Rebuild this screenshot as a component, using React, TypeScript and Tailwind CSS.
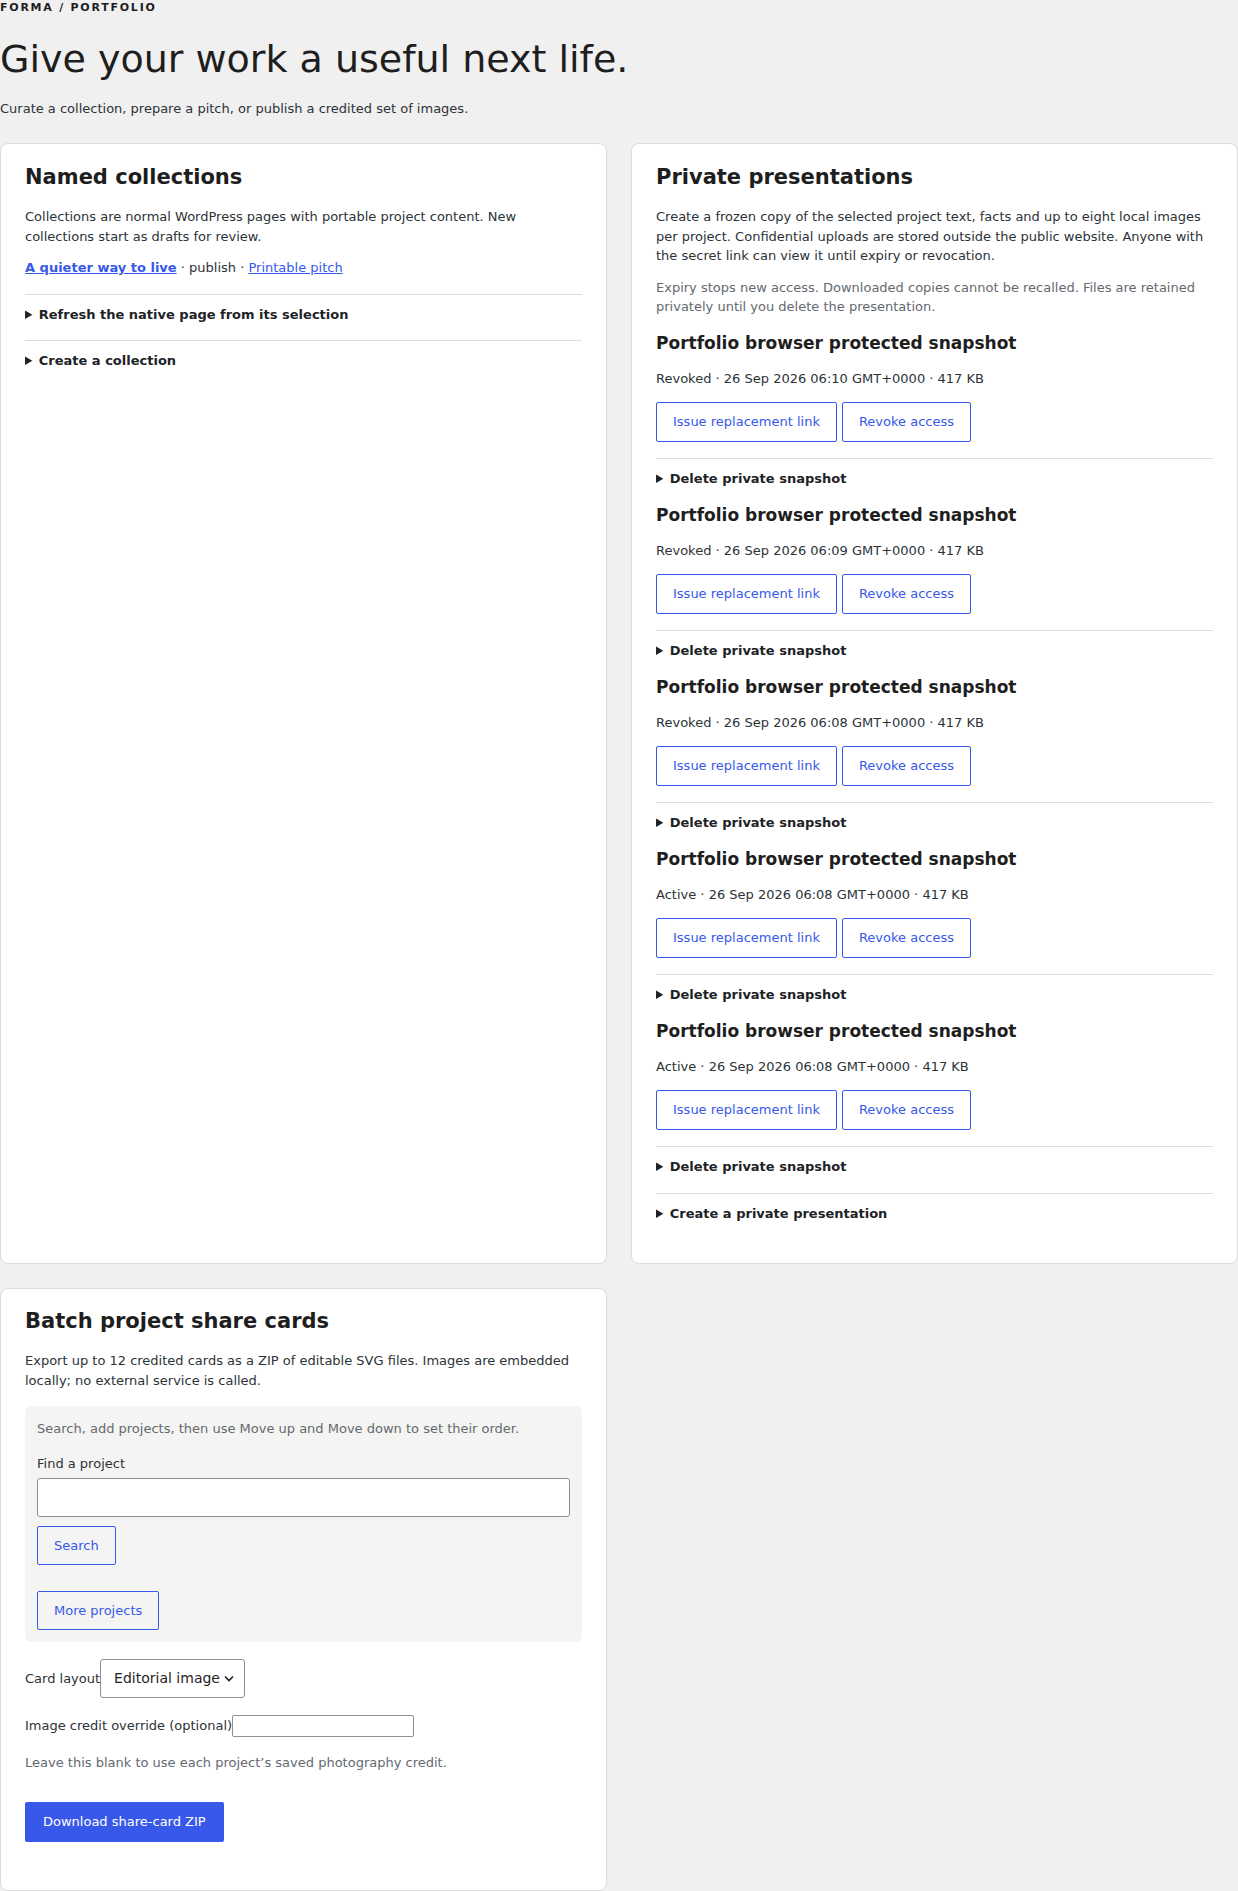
import { ReactNode } from "react";

const snapshots = [
  { id: "s1", status: "Revoked", stamp: "26 Sep 2026 06:10 GMT+0000", size: "417 KB" },
  { id: "s2", status: "Revoked", stamp: "26 Sep 2026 06:09 GMT+0000", size: "417 KB" },
  { id: "s3", status: "Revoked", stamp: "26 Sep 2026 06:08 GMT+0000", size: "417 KB" },
  { id: "s4", status: "Active", stamp: "26 Sep 2026 06:08 GMT+0000", size: "417 KB" },
  { id: "s5", status: "Active", stamp: "26 Sep 2026 06:08 GMT+0000", size: "417 KB" },
];

const OutlineButton = ({ children, tall = true }: { children: ReactNode; tall?: boolean }) => (
  <button
    type="button"
    className={
      (tall ? "h-[40px] " : "h-[39px] ") +
      "rounded-[2px] border border-[#3858e9] bg-transparent px-4 text-[13px] leading-[19.5px] text-[#3858e9]"
    }
  >
    {children}
  </button>
);

const Toggle = ({ label, className }: { label: string; className: string }) => (
  <details className={"border-t border-[#dcdcdc] pt-[10px] " + className}>
    <summary className="cursor-pointer text-[13px] font-bold leading-[19.5px] text-[#1d2327]">
      {label}
    </summary>
  </details>
);

const Card = ({ children, className }: { children: ReactNode; className: string }) => (
  <section className={"rounded-lg border border-[#dcdcdc] bg-white px-6 " + className}>{children}</section>
);

const CardTitle = ({ children }: { children: ReactNode }) => (
  <h2 className="text-[21px] font-bold leading-[25px] text-[#1e1e1e]">{children}</h2>
);

const App = () => {
  return (
    <div className="min-h-screen w-full bg-[#f0f0f0] font-['DejaVu_Sans',sans-serif] text-[13px] leading-[19.5px] text-[#2c3338]">
      <p className="text-[11px] font-bold uppercase leading-[16px] tracking-[0.16em] text-[#1e1e1e]">
        Forma / Portfolio
      </p>
      <h1 className="mt-[21px] text-[38px] font-normal leading-[1.2] text-[#1e1e1e]">
        Give your work a useful next life.
      </h1>
      <p className="mt-[16px]">Curate a collection, prepare a pitch, or publish a credited set of images.</p>

      <div className="mt-[25px] grid grid-cols-2 gap-6">
        <Card className="pt-[21px] pb-[40px]">
          <CardTitle>Named collections</CardTitle>
          <p className="mt-[17px]">
            Collections are normal WordPress pages with portable project content. New collections start as
            drafts for review.
          </p>
          <p className="mt-[12px]">
            <a href="#" className="font-bold text-[#3858e9] underline">
              A quieter way to live
            </a>{" "}
            · publish ·{" "}
            <a href="#" className="text-[#3858e9] underline">
              Printable pitch
            </a>
          </p>
          <Toggle label="Refresh the native page from its selection" className="mt-[16px]" />
          <Toggle label="Create a collection" className="mt-[16px]" />
        </Card>

        <Card className="pt-[21px] pb-[40px]">
          <CardTitle>Private presentations</CardTitle>
          <p className="mt-[17px]">
            Create a frozen copy of the selected project text, facts and up to eight local images per project.
            Confidential uploads are stored outside the public website. Anyone with the secret link can view it
            until expiry or revocation.
          </p>
          <p className="mt-[12px] text-[#646970]">
            Expiry stops new access. Downloaded copies cannot be recalled. Files are retained privately until
            you delete the presentation.
          </p>
          {snapshots.map((snap) => (
            <div key={snap.id} className="mt-[15px]">
              <h3 className="text-[17px] font-bold leading-[22px] text-[#1e1e1e]">
                Portfolio browser protected snapshot
              </h3>
              <p className="mt-[15px]">
                {snap.status} · {snap.stamp} · {snap.size}
              </p>
              <div className="mt-[14px] flex gap-[5px]">
                <OutlineButton>Issue replacement link</OutlineButton>
                <OutlineButton>Revoke access</OutlineButton>
              </div>
              <Toggle label="Delete private snapshot" className="mt-[16px]" />
            </div>
          ))}
          <Toggle label="Create a private presentation" className="mt-[16px]" />
        </Card>

        <Card className="pt-[20px] pb-[48px]">
          <CardTitle>Batch project share cards</CardTitle>
          <p className="mt-[17px]">
            Export up to 12 credited cards as a ZIP of editable SVG files. Images are embedded locally; no
            external service is called.
          </p>
          <div className="mt-[16px] rounded-md bg-[#f4f5f2] px-3 pb-3 pt-[13px]">
            <p className="text-[#646970]">Search, add projects, then use Move up and Move down to set their order.</p>
            <label className="mt-[15px] block" htmlFor="find-project">
              Find a project
            </label>
            <input
              id="find-project"
              type="text"
              className="mt-[5px] block h-[39px] w-full rounded-[3px] border border-[#8c8f94] bg-white px-2"
            />
            <div className="mt-[9px]">
              <OutlineButton tall={false}>Search</OutlineButton>
            </div>
            <div className="mt-[26px]">
              <OutlineButton tall={false}>More projects</OutlineButton>
            </div>
          </div>

          <div className="mt-[17px] flex items-center">
            <label htmlFor="card-layout">Card layout</label>
            <div className="relative">
              <select
                id="card-layout"
                defaultValue="editorial"
                className="h-[39px] w-[145px] appearance-none rounded-[3px] border border-[#8c8f94] bg-white pl-[13px] pr-6 text-[14px] text-[#1e1e1e]"
              >
                <option value="editorial">Editorial image</option>
                <option value="quote">Pull quote</option>
              </select>
              <svg
                className="pointer-events-none absolute right-[11px] top-[16px]"
                width="10"
                height="7"
                viewBox="0 0 10 7"
                fill="none"
              >
                <path d="M1 1.5l4 4 4-4" stroke="#1e1e1e" strokeWidth="1.6" />
              </svg>
            </div>
          </div>

          <div className="mt-[17px] flex items-center">
            <label htmlFor="credit-override">Image credit override (optional)</label>
            <input
              id="credit-override"
              type="text"
              className="h-[22px] w-[182px] rounded-[2px] border border-[#8c8f94] bg-white px-1"
            />
          </div>
          <p className="mt-[16px] text-[#646970]">Leave this blank to use each project’s saved photography credit.</p>

          <button
            type="button"
            className="mt-[29px] h-[40px] rounded-[2px] bg-[#3858e9] px-[18px] text-[13px] text-white"
          >
            Download share-card ZIP
          </button>
        </Card>
      </div>
    </div>
  );
};

export default App;
